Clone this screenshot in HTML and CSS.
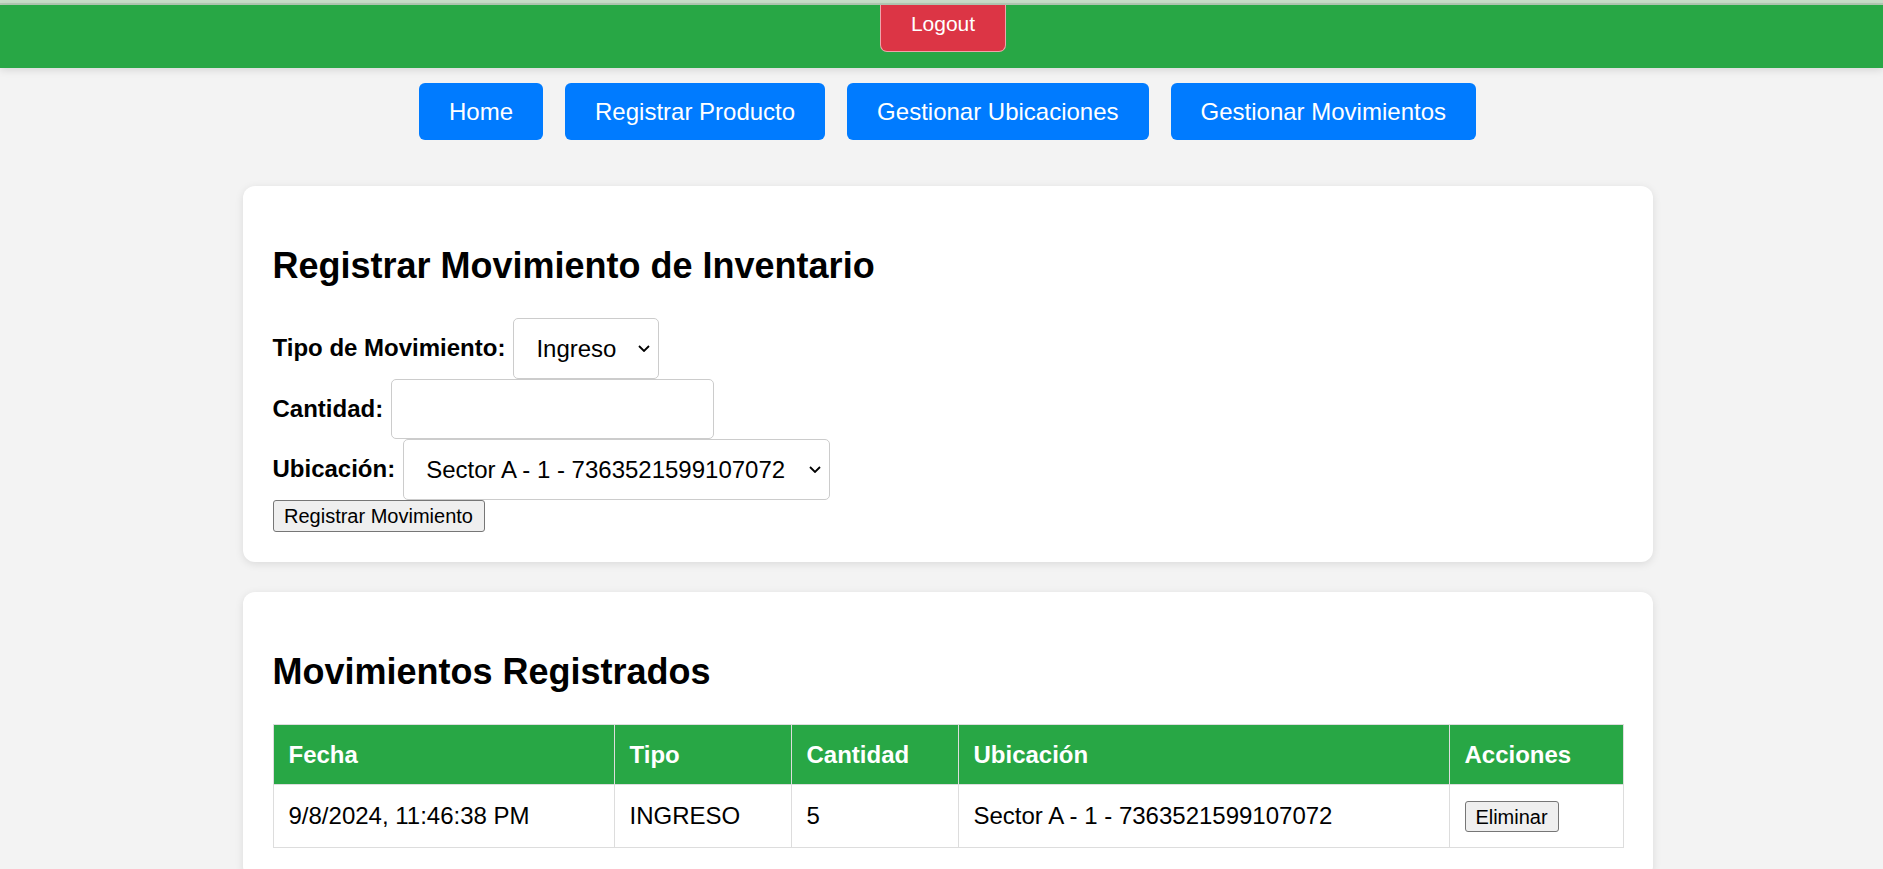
FILE: index.html
```html
<!DOCTYPE html>
<html lang="es">
<head>
<meta charset="utf-8">
<title>Gestionar Movimientos</title>
<link rel="stylesheet" href="styles.css">
</head>
<body>
<div class="topline"></div>
<header class="topbar">
  <button class="logout" type="button">Logout</button>
</header>
<div class="page">
  <nav class="nav">
    <a class="nav-btn" href="#">Home</a>
    <a class="nav-btn" href="#">Registrar Producto</a>
    <a class="nav-btn" href="#">Gestionar Ubicaciones</a>
    <a class="nav-btn" href="#">Gestionar Movimientos</a>
  </nav>
  <main class="main">
    <section class="card">
      <h2 class="card-title">Registrar Movimiento de Inventario</h2>
      <form class="form">
        <div class="row">
          <label class="lbl" for="tipo">Tipo de Movimiento:</label>
          <select id="tipo" class="ctl sel sel-tipo">
            <option>Ingreso</option>
            <option>Egreso</option>
          </select>
        </div>
        <div class="row">
          <label class="lbl" for="cant">Cantidad:</label>
          <input id="cant" class="ctl inp" type="number">
        </div>
        <div class="row">
          <label class="lbl" for="ubic">Ubicación:</label>
          <select id="ubic" class="ctl sel sel-ubic">
            <option>Sector A - 1 - 7363521599107072</option>
          </select>
        </div>
        <button class="btn btn-submit" type="button">Registrar Movimiento</button>
      </form>
    </section>
    <section class="card">
      <h2 class="card-title">Movimientos Registrados</h2>
      <table class="tbl">
        <thead>
          <tr>
            <th class="c-fecha">Fecha</th>
            <th class="c-tipo">Tipo</th>
            <th class="c-cant">Cantidad</th>
            <th class="c-ubic">Ubicación</th>
            <th class="c-acc">Acciones</th>
          </tr>
        </thead>
        <tbody>
          <tr>
            <td>9/8/2024, 11:46:38 PM</td>
            <td>INGRESO</td>
            <td>5</td>
            <td>Sector A - 1 - 7363521599107072</td>
            <td><button class="btn btn-del" type="button">Eliminar</button></td>
          </tr>
        </tbody>
      </table>
    </section>
  </main>
</div>
</body>
</html>
```

FILE: styles.css
```css
* { box-sizing: border-box; }

html, body {
  margin: 0;
  padding: 0;
  height: 100%;
  overflow: hidden;
}

body {
  background: #f3f3f3;
  font-family: "Liberation Sans", Arial, sans-serif;
  font-size: 24px;
  color: #000;
}

.topline {
  height: 5px;
  background: #b4c9b4;
  border-top: 3px solid #c8dcc8;
}

.topbar {
  height: 63px;
  background: #28a745;
  display: flex;
  justify-content: center;
  align-items: flex-start;
  box-shadow: 0 2px 8px rgba(0, 0, 0, 0.12);
  position: relative;
  z-index: 1;
}

.logout {
  margin-left: 3px;
  height: 47px;
  width: 126px;
  padding: 0 0 9px;
  background: #dc3545;
  color: #fff;
  font-family: "Liberation Sans", Arial, sans-serif;
  font-size: 21px;
  line-height: 24px;
  border: 1px solid rgba(255, 255, 255, 0.55);
  border-top: 0;
  border-radius: 0 0 7px 7px;
  text-align: center;
}

.page {
  padding-left: 12px;
}

.nav {
  display: flex;
  justify-content: center;
  gap: 22px;
  margin-top: 15px;
}

.nav-btn {
  display: block;
  height: 57px;
  padding: 15px 30px 0;
  background: #007bff;
  color: #fff;
  text-decoration: none;
  font-size: 24px;
  line-height: 28px;
  border-radius: 6px;
}

.main {
  width: 1410px;
  margin: 46px auto 0;
  display: flex;
  flex-direction: column;
  gap: 30px;
}

.card {
  background: #fff;
  border-radius: 12px;
  padding: 30px;
  box-shadow: 0 2px 9px rgba(0, 0, 0, 0.1);
}

.card-title {
  margin: 29px 0 31px;
  font-size: 36px;
  line-height: 42px;
  font-weight: bold;
}

.form {
  display: flex;
  flex-direction: column;
  align-items: flex-start;
}

.row {
  display: flex;
  align-items: center;
  gap: 8px;
  height: 60.5px;
}

.lbl {
  font-weight: bold;
  font-size: 24px;
}

.ctl {
  height: 60.5px;
  border: 1px solid #ccc;
  border-radius: 5px;
  background-color: #fff;
  font-family: "Liberation Sans", Arial, sans-serif;
  font-size: 24px;
  color: #000;
}

.sel {
  appearance: none;
  -webkit-appearance: none;
  padding: 0 30px 0 22px;
  background-image: url("data:image/svg+xml,%3Csvg xmlns='http://www.w3.org/2000/svg' width='12' height='7' viewBox='0 0 12 7'%3E%3Cpath d='M1 1l5 5 5-5' fill='none' stroke='%23000' stroke-width='1.8'/%3E%3C/svg%3E");
  background-repeat: no-repeat;
  background-position: right 8px center;
  background-size: 12px 7px;
}

.sel-tipo { width: 146px; }
.sel-ubic { width: 427px; }

.inp {
  width: 323px;
  padding: 0 15px;
}

.btn {
  font-family: "Liberation Sans", Arial, sans-serif;
  font-size: 20px;
  line-height: 24px;
  color: #000;
  background: #efefef;
  border: 1px solid #767676;
  border-radius: 3px;
  padding: 3px 9px;
}

.btn-submit {
  width: 212px;
}

.btn-del {
  height: 31px;
  padding: 2px 9px;
  width: 94px;
}

.tbl {
  width: 100%;
  border-collapse: collapse;
  table-layout: fixed;
}

.tbl th,
.tbl td {
  border: 1px solid #ddd;
  padding: 15px;
  text-align: left;
  font-size: 24px;
  vertical-align: middle;
}

.tbl th {
  background: #28a745;
  color: #fff;
  font-weight: bold;
  line-height: 29px;
}

.tbl td {
  line-height: 31px;
}

.c-fecha { width: 341px; }
.c-tipo { width: 177px; }
.c-cant { width: 167px; }
.c-ubic { width: 491px; }
.c-acc { width: 174px; }
```
